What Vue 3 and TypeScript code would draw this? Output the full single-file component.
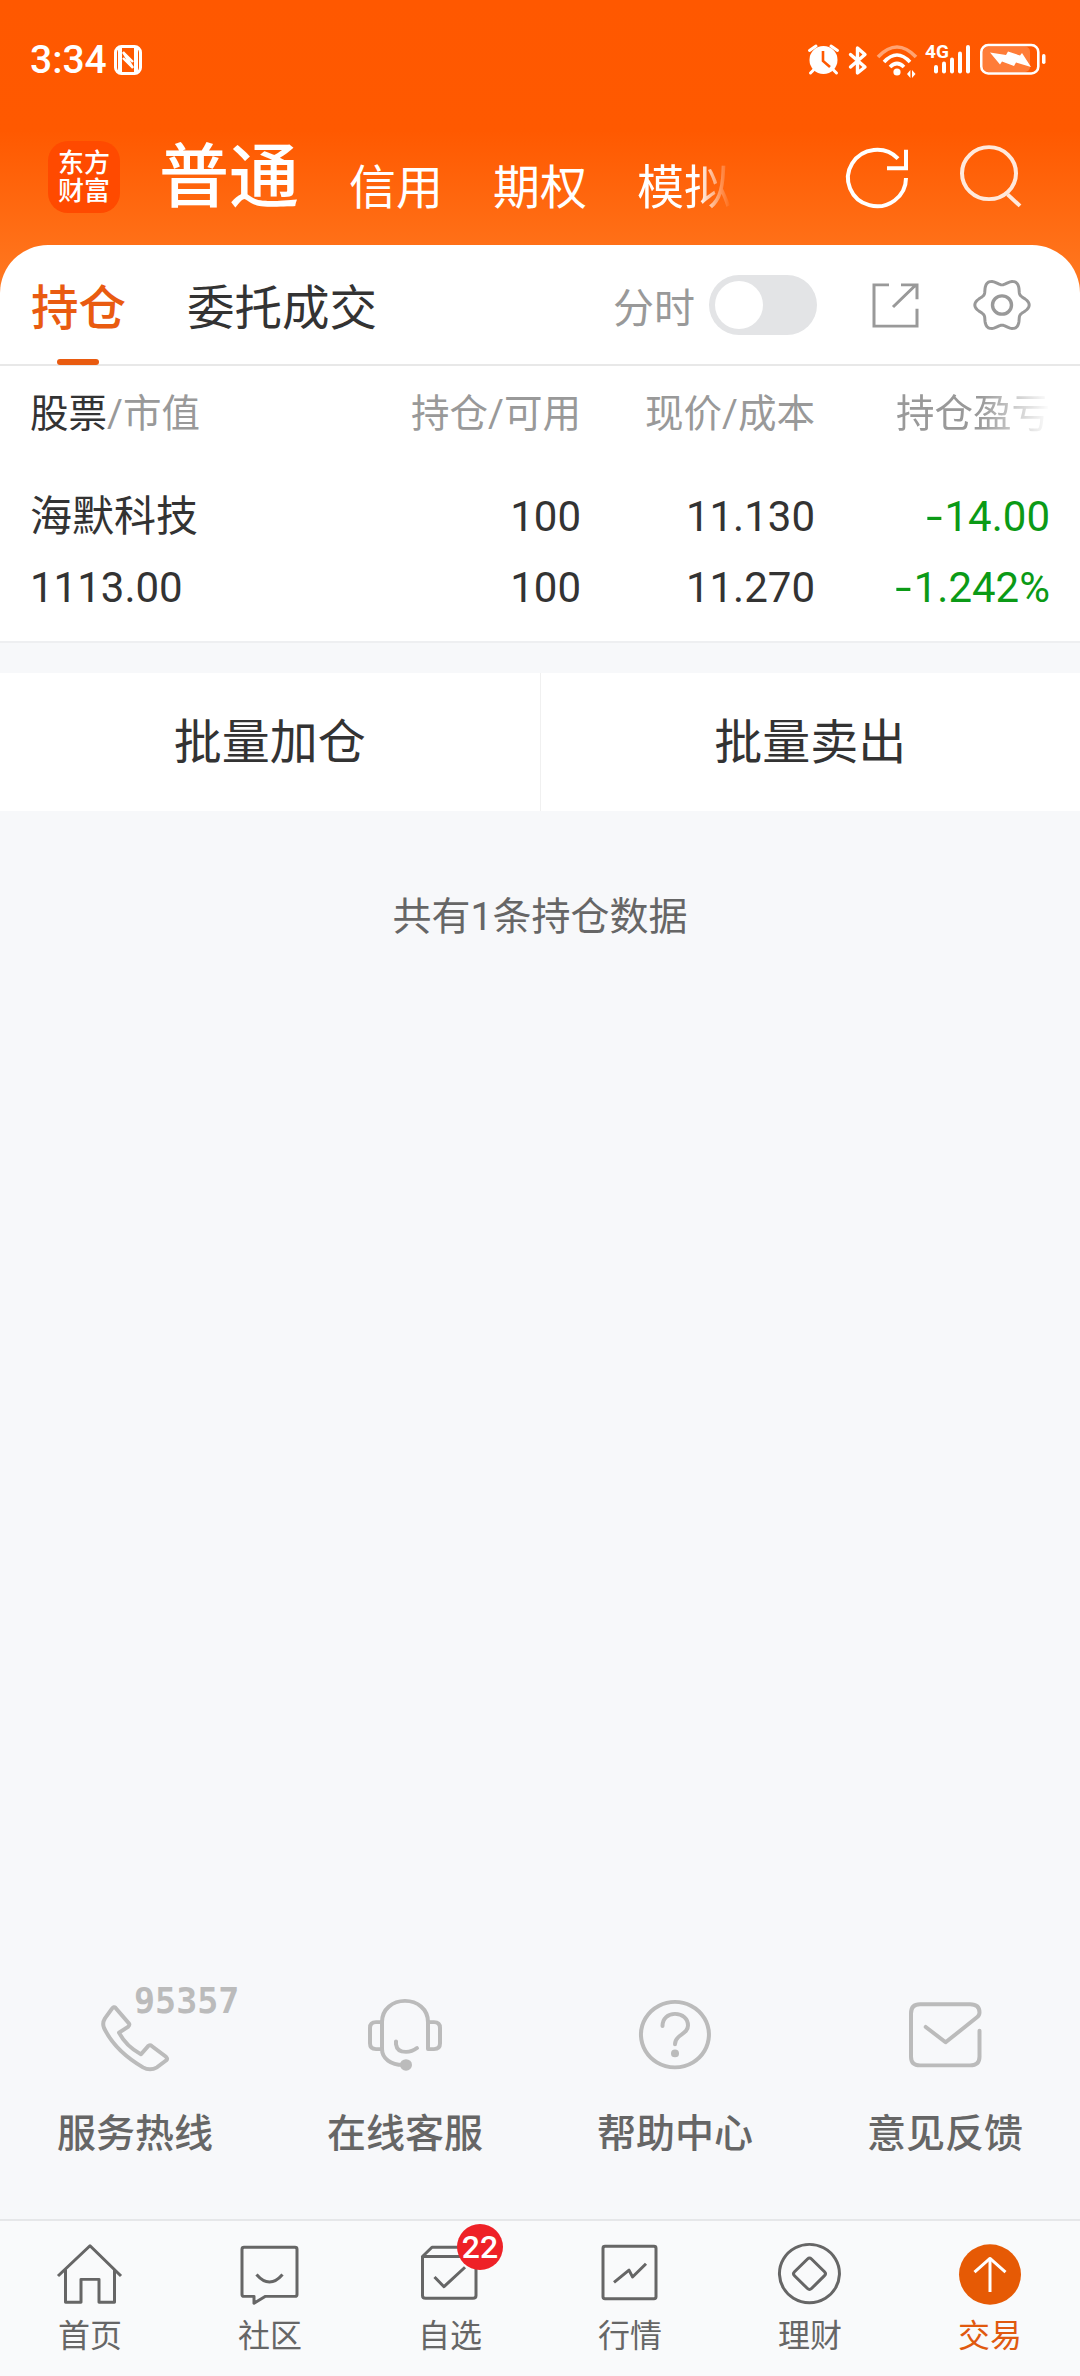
<template>
  <div class="page">
    <header class="top">
      <div class="status">
        <div class="clock">
          <span>3:34</span>
          <svg class="nfc" width="28" height="30" viewBox="0 0 28 30">
            <rect x="1.500" y="1.500" width="25" height="27" rx="6" fill="none" stroke="#fff" stroke-width="3" />
            <path d="M4 3h4v24H4zM20 3h4v24h-4z" fill="#fff" />
            <path d="M9 7l10 16M9 13l10 10M9 7l10 10" fill="none" stroke="#fff" stroke-width="2.400" />
          </svg>
        </div>
        <svg class="status-icons" width="250" height="40" viewBox="0 0 250 40">
          <!-- alarm -->
          <circle cx="23.500" cy="20" r="14" fill="#fff" />
          <path d="M23 11v10l7 6" fill="none" stroke="#ff5900" stroke-width="2.600" />
          <path d="M9.500 10.500L16 6M31 6l6.500 4.500M13.500 30l-3 3M33.500 30l3 3" fill="none" stroke="#fff" stroke-width="3" stroke-linecap="round" />
          <!-- bluetooth -->
          <path d="M50.500 14.500L65 27l-7.500 6V8L65 14.500 50.500 27" fill="none" stroke="#fff" stroke-width="3.400" stroke-linejoin="round" stroke-linecap="round" />
          <!-- wifi -->
          <path d="M78 17Q97-3 116 17" fill="none" stroke="#fff" stroke-opacity=".45" stroke-width="3.600" />
          <path d="M84 22Q97 8 110 22M90 27Q97 20 104 27" fill="none" stroke="#fff" stroke-width="3.600" />
          <circle cx="97" cy="32" r="3.600" fill="#fff" />
          <path d="M107 34l3.400-4v8zM112 30l3.500 4-3.500 4z" fill="#fff" />
          <!-- cellular -->
          <text x="125" y="18" class="net">4G</text>
          <rect v-for="bar in signalBars" :key="bar[0]" :x="bar[0]" :y="bar[1]" width="4" :height="33.500 - bar[1]" rx="2" fill="#fff" />
          <!-- battery -->
          <rect x="183" y="6.500" width="47" height="25.500" rx="5" fill="#fff" fill-opacity=".22" />
          <rect x="181.300" y="5" width="57" height="28.500" rx="7" fill="none" stroke="#fff" stroke-width="2.600" />
          <path d="M190 12.500L206 15L208 11.500L220 15.500L222 13L231 27L216 22.500L214 26L202 21.500L200 24.500Z" fill="#fff" />
          <rect x="242" y="14" width="3.500" height="10" rx="1.700" fill="#fff" />
        </svg>
      </div>

      <nav class="nav">
        <div class="logo">东方<br />财富</div>
        <span class="nav-main">普通</span>
        <span class="nav-item">信用</span>
        <span class="nav-item">期权</span>
        <span class="nav-item fade">模拟</span>
        <svg class="refresh" viewBox="0 0 72 72" preserveAspectRatio="none">
          <path d="M65 36A29 29 0 1 1 57 16M46 26h19V7" fill="none" stroke="#fff" stroke-width="4" />
        </svg>
        <svg class="search" viewBox="0 0 80 80" preserveAspectRatio="none">
          <circle cx="38" cy="35.500" r="27" fill="none" stroke="#ffe9dc" stroke-width="4" />
          <path d="M56.500 57.500L69 69.500" stroke="#ffe9dc" stroke-width="4" />
        </svg>
      </nav>

      <div class="tabs">
        <span class="tab active">持仓</span>
        <span class="tab">委托成交</span>
        <span class="tab-label">分时</span>
        <span class="switch"><i></i></span>
        <svg class="share" viewBox="0 0 50 50" preserveAspectRatio="none">
          <path d="M19 4H4v43h43V29M23 27L46 4M31 4h16v15" fill="none" stroke="#999" stroke-width="3" />
        </svg>
        <svg class="gear" viewBox="0 0 60 60" preserveAspectRatio="none">
          <path :d="gearPath" fill="none" stroke="#999" stroke-width="3" stroke-linejoin="round" />
          <circle cx="30" cy="30" r="9.500" fill="none" stroke="#999" stroke-width="3.400" />
        </svg>
      </div>
    </header>

    <section class="holdings">
      <div class="grid head">
        <span><b>股票</b>/市值</span>
        <span>持仓/可用</span>
        <span>现价/成本</span>
        <span class="head-fade">持仓盈亏</span>
      </div>
      <div class="rows">
        <div v-for="row in rows" :key="row[0]" class="grid row">
          <span v-for="(cell, i) in row" :key="i" :class="{ loss: i === 3 }">
            <template v-if="i === 3"><i class="sign">{{ cell[0] }}</i>{{ cell.slice(1) }}</template>
            <template v-else>{{ cell }}</template>
          </span>
        </div>
      </div>
    </section>

    <div class="actions">
      <button>批量加仓</button>
      <button>批量卖出</button>
    </div>

    <p class="count">共有1条持仓数据</p>

    <div class="links">
      <a v-for="link in links" :key="link.label" class="link">
        <span class="link-icon">
          <svg viewBox="0 0 80 80" preserveAspectRatio="none">
            <path v-for="d in link.paths" :key="d" :d="d" fill="none" stroke="#bbb" stroke-width="4" stroke-linecap="round" stroke-linejoin="round" />
            <circle v-if="link.dot" :cx="link.dot[0]" :cy="link.dot[1]" :r="link.dot[2]" fill="#bbb" />
          </svg>
          <em v-if="link.hotline">{{ link.hotline }}</em>
        </span>
        <span>{{ link.label }}</span>
      </a>
    </div>

    <footer class="tabbar">
      <a v-for="item in tabbar" :key="item.label" class="bar-item" :class="{ current: item.current }">
        <span class="bar-icon">
          <svg viewBox="0 0 72 72" preserveAspectRatio="none">
            <circle v-if="item.current" cx="36" cy="36.500" r="31" fill="#e65a05" />
            <path v-for="d in item.paths" :key="d" :d="d" fill="none" :stroke="item.current ? '#fff' : '#666'" stroke-width="3" stroke-linejoin="round" />
          </svg>
          <i v-if="item.badge" class="badge">{{ item.badge }}</i>
        </span>
        <span>{{ item.label }}</span>
      </a>
    </footer>
  </div>
</template>

<script setup lang="ts">
interface LinkItem {
  label: string
  paths: string[]
  dot?: number[]
  hotline?: string
}

interface BarItem {
  label: string
  paths: string[]
  badge?: string
  current?: boolean
}

// x and top of each bar in the cellular indicator
const signalBars = [
  [134, 25],
  [142, 21.5],
  [150, 17.5],
  [158, 11.5],
  [166, 5]
]

const rows = [
  ['海默科技', '100', '11.130', '-14.00'],
  ['1113.00', '100', '11.270', '-1.242%']
]

const links: LinkItem[] = [
  {
    label: '服务热线',
    hotline: '95357',
    paths: [
      'M20.400 9L34 25.400Q35 27 33 29L24 35Q31 49 46 57.500L53 49Q54.800 47 57 49L71 60Q73 62 71 64L62 71Q55 75 48 71Q20 54 9 30Q7 25 10 20L17 10Q19 7.500 20.400 9Z'
    ]
  },
  {
    label: '在线客服',
    dot: [41, 68.5, 6],
    paths: [
      'M17 26V24C17 10 28 2 40 2C52 2 63 10 63 24V26',
      'M17 24H11Q5 24 5 30V46Q5 52 11 52H17Z',
      'M63 24H69Q75 24 75 30V46Q75 52 69 52H63Z',
      'M17 52C17 62 26 68.500 38 68.500',
      'M31 44V47Q32 55 41 55Q47 55 52 51'
    ]
  },
  {
    label: '帮助中心',
    dot: [40, 56.5, 4],
    paths: [
      'M40 3A34 34 0 1 1 39.900 3Z',
      'M27.500 28C27.500 20 33 15.500 40 15.500C47.500 15.500 53 20.500 53 27.500C53 34 47 36 43 40C40.500 42.500 40 44 40 47'
    ]
  },
  {
    label: '意见反馈',
    paths: [
      'M74.500 33V60Q74.500 69 65 69H15Q6 69 6 60V15Q6 5.500 15 5.500H65Q74.500 5.500 74.500 14Q74.500 17 72 19L40.600 45L20.700 29'
    ]
  }
]

const tabbar: BarItem[] = [
  {
    label: '首页',
    paths: ['M4 38L36 7L67 38', 'M11.500 31V65H27V41.500H45V65H60.500V31']
  },
  {
    label: '社区',
    paths: [
      'M10 8.500H61Q63 8.500 63 10.500V57Q63 59 61 59H31.500L20 66V59H10Q8 59 8 57V10.500Q8 8.500 10 8.500Z',
      'M22.500 36.500Q35.500 52 48.500 36.500'
    ]
  },
  {
    label: '自选',
    badge: '22',
    paths: [
      'M8.500 18V58Q8.500 61 11.500 61H59Q62 61 62 58V11Q62 8.500 59 8.500H18L8.500 18H62',
      'M20.500 39L30 49L51 29'
    ]
  },
  {
    label: '行情',
    paths: [
      'M11 7.500H60Q62 7.500 62 9.500V59.500Q62 61.500 60 61.500H11Q9 61.500 9 59.500V9.500Q9 7.500 11 7.500Z',
      'M20 44.500L35 32L38.500 39L52 25.500'
    ]
  },
  {
    label: '理财',
    paths: [
      'M35.500 5.500A30 30 0 1 1 35.400 5.500Z',
      'M33.500 20.500Q35.500 18.500 37.500 20.500L50.500 33.700Q52.500 35.700 50.500 37.700L37.500 51Q35.500 53 33.500 51L20.500 37.700Q18.500 35.700 20.500 33.700Z'
    ]
  },
  {
    label: '交易',
    current: true,
    paths: ['M36 20.500V54.500', 'M20.500 34L36 20L51.500 34']
  }
]

// six soft lobes, traced in polar form around the centre of the icon
const gearPath = (() => {
  const points: string[] = []
  for (let i = 0; i < 96; i++) {
    const a = (i / 96) * Math.PI * 2
    const r = 24 + 3.2 * Math.cos(6 * a)
    points.push(`${(30 + r * Math.cos(a)).toFixed(2)} ${(30 + r * Math.sin(a)).toFixed(2)}`)
  }
  return `M${points.join('L')}Z`
})()
</script>

<style>
body {
  background: #f7f8fa;
}
</style>

<style scoped>
.page {
  width: 1080px;
  height: 2376px;
  display: flex;
  flex-direction: column;
  overflow: hidden;
  background: #f7f8fa;
  color: #333;
  font-family: Roboto, "Noto Sans CJK SC", sans-serif;
}

.top {
  background: linear-gradient(#ff5800 0, #ff5900 130px, #ff7a22 295px);
}

.status {
  height: 120px;
  padding: 0 30px;
  display: flex;
  align-items: center;
  justify-content: space-between;
  box-sizing: border-box;
  color: #fff;
}

.clock {
  display: flex;
  align-items: center;
  gap: 7px;
  font-size: 39px;
  font-weight: 500;
}

.net {
  font: 700 19px "Roboto", sans-serif;
  fill: #fff;
}

.nav {
  height: 125px;
  padding-left: 48px;
  display: flex;
  align-items: flex-start;
  color: #fff;
}

.logo {
  width: 72px;
  height: 72px;
  margin-top: 21px;
  margin-right: 39px;
  border-radius: 20px;
  background: #ff4a00;
  font-size: 26px;
  line-height: 28px;
  font-weight: 500;
  text-align: center;
  padding-top: 8px;
  box-sizing: border-box;
}

.nav-main {
  font-size: 70px;
  font-weight: 500;
  line-height: 100px;
  margin-top: 8px;
  margin-right: 50px;
}

.nav-item {
  font-size: 47px;
  line-height: 70px;
  margin-top: 33px;
  margin-right: 50px;
}

.fade {
  -webkit-mask-image: linear-gradient(to right, #000 65%, transparent 100%);
  mask-image: linear-gradient(to right, #000 65%, transparent 100%);
}

.refresh {
  width: 72px;
  height: 70px;
  margin: 23px 0 0 60px;
}

.search {
  width: 80px;
  height: 77px;
  margin: 19px 0 0 38px;
}

.tabs {
  position: relative;
  height: 121px;
  display: flex;
  align-items: center;
  padding: 0 48px 0 31px;
  background: #fff;
  border-radius: 48px 48px 0 0;
  border-bottom: 2px solid #e8e8e8;
  box-sizing: border-box;
}

.tab {
  font-size: 47.5px;
  margin-right: 61px;
}

.active {
  color: #e95b10;
  font-weight: 500;
}

.active::after {
  content: "";
  position: absolute;
  left: 57px;
  bottom: -1px;
  width: 42px;
  height: 6px;
  border-radius: 3px;
  background: #e95b10;
}

.tab-label {
  margin-left: auto;
  font-size: 41px;
  color: #999;
}

.switch {
  width: 108px;
  height: 60px;
  margin-left: 14px;
  border-radius: 30px;
  background: #e3e4e6;
  display: flex;
  align-items: center;
  padding-left: 6px;
  box-sizing: border-box;
}

.switch i {
  width: 48px;
  height: 48px;
  border-radius: 50%;
  background: #fff;
}

.share {
  width: 50px;
  height: 48px;
  margin-left: 53px;
}

.gear {
  width: 60px;
  height: 58px;
  margin-left: 52px;
}

.holdings {
  background: #fff;
  border-bottom: 2px solid #eeeff1;
  padding-bottom: 18px;
}

.grid {
  display: grid;
  grid-template-columns: 1fr 234px 234px 235px;
  padding: 0 30px;
  text-align: right;
}

.grid span:first-child {
  text-align: left;
}

.head {
  height: 96px;
  line-height: 96px;
  font-size: 38.5px;
  color: #999;
}

.head b {
  font-weight: 400;
  color: #333;
}

.head-fade {
  -webkit-mask-image: linear-gradient(to left, transparent 0, #000 70px);
  mask-image: linear-gradient(to left, transparent 0, #000 70px);
}

.rows {
  padding-top: 19px;
}

.row {
  height: 71px;
  line-height: 71px;
  font-size: 42px;
}

.loss {
  color: #0b9a16;
}

.sign {
  display: inline-block;
  width: 21px;
  font-style: normal;
  text-align: center;
  transform: scaleX(1.4);
}

.actions {
  margin-top: 30px;
  height: 138px;
  display: flex;
  background: #fff;
}

.actions button {
  flex: 1;
  border: 0;
  padding: 0 0 8px;
  background: none;
  font: inherit;
  font-size: 48px;
  color: #333;
}

.actions button + button {
  border-left: 1px solid #f0f0f0;
}

.count {
  flex: 1;
  margin: 78px 0 0;
  text-align: center;
  font-size: 39px;
  line-height: 56px;
  color: #666;
}

.links {
  display: grid;
  grid-template-columns: repeat(4, 270px);
  height: 220px;
}

.link {
  display: flex;
  flex-direction: column;
  align-items: center;
  font-size: 39px;
  font-weight: 500;
  color: #666;
  line-height: 56px;
}

.link-icon {
  position: relative;
  height: 107px;
}

.link-icon svg {
  display: block;
  width: 80px;
  height: 77px;
}

.link-icon em {
  position: absolute;
  left: 39px;
  top: -18px;
  font: 700 35px/40px "DejaVu Sans Mono", monospace;
  color: #bbb;
}

.tabbar {
  height: 157px;
  display: grid;
  grid-template-columns: repeat(6, 180px);
  background: #f9fafb;
  border-top: 2px solid #e6e7e9;
  box-sizing: border-box;
}

.bar-item {
  display: flex;
  flex-direction: column;
  align-items: center;
  padding-top: 18px;
  font-size: 32px;
  line-height: 44px;
  color: #666;
}

.bar-item.current {
  color: #e0590f;
}

.bar-icon {
  position: relative;
  height: 75px;
}

.bar-icon svg {
  display: block;
  width: 72px;
  height: 70px;
}

.badge {
  position: absolute;
  left: 43px;
  top: -15px;
  width: 46px;
  height: 46px;
  border-radius: 50%;
  background: #ee2127;
  color: #fff;
  font-style: normal;
  font-size: 32px;
  font-weight: 500;
  line-height: 46px;
  text-align: center;
}
</style>
